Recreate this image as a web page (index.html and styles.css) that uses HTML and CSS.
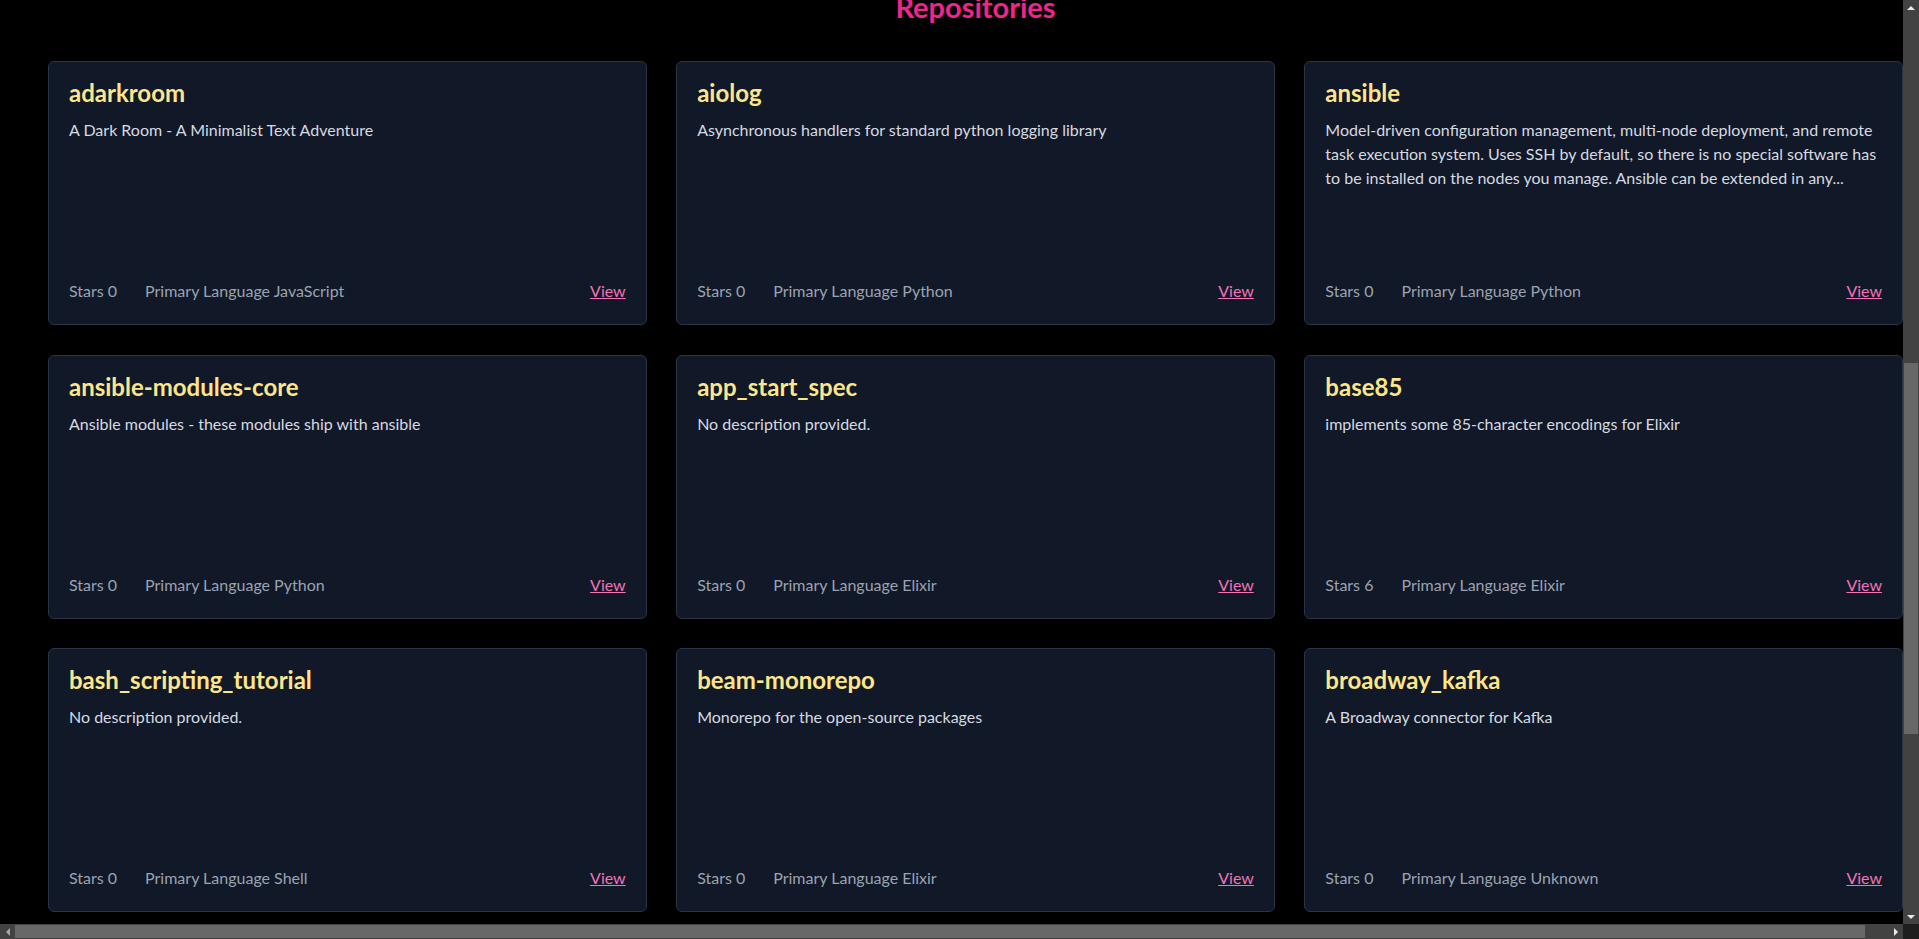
FILE: index.html
```html
<!DOCTYPE html>
<html lang="en">
<head>
<meta charset="utf-8">
<title>Repositories</title>
<link rel="stylesheet" href="styles.css">
</head>
<body>
<div class="window">
  <main class="viewport">
    <div class="page">
      <h1 class="page-title">Repositories</h1>
      <div class="repo-grid">
        <article class="card">
          <h2 class="card-name">adarkroom</h2>
          <p class="card-desc">A Dark Room - A Minimalist Text Adventure</p>
          <div class="card-foot"><span>Stars 0</span><span>Primary Language JavaScript</span><a class="view" href="#">View</a></div>
        </article>
        <article class="card">
          <h2 class="card-name">aiolog</h2>
          <p class="card-desc">Asynchronous handlers for standard python logging library</p>
          <div class="card-foot"><span>Stars 0</span><span>Primary Language Python</span><a class="view" href="#">View</a></div>
        </article>
        <article class="card">
          <h2 class="card-name">ansible</h2>
          <p class="card-desc">Model-driven configuration management, multi-node deployment, and remote task execution system. Uses SSH by default, so there is no special software has to be installed on the nodes you manage. Ansible can be extended in any...</p>
          <div class="card-foot"><span>Stars 0</span><span>Primary Language Python</span><a class="view" href="#">View</a></div>
        </article>
        <article class="card">
          <h2 class="card-name">ansible-modules-core</h2>
          <p class="card-desc">Ansible modules - these modules ship with ansible</p>
          <div class="card-foot"><span>Stars 0</span><span>Primary Language Python</span><a class="view" href="#">View</a></div>
        </article>
        <article class="card">
          <h2 class="card-name">app_start_spec</h2>
          <p class="card-desc">No description provided.</p>
          <div class="card-foot"><span>Stars 0</span><span>Primary Language Elixir</span><a class="view" href="#">View</a></div>
        </article>
        <article class="card">
          <h2 class="card-name">base85</h2>
          <p class="card-desc">implements some 85-character encodings for Elixir</p>
          <div class="card-foot"><span>Stars 6</span><span>Primary Language Elixir</span><a class="view" href="#">View</a></div>
        </article>
        <article class="card">
          <h2 class="card-name">bash_scripting_tutorial</h2>
          <p class="card-desc">No description provided.</p>
          <div class="card-foot"><span>Stars 0</span><span>Primary Language Shell</span><a class="view" href="#">View</a></div>
        </article>
        <article class="card">
          <h2 class="card-name">beam-monorepo</h2>
          <p class="card-desc">Monorepo for the open-source packages</p>
          <div class="card-foot"><span>Stars 0</span><span>Primary Language Elixir</span><a class="view" href="#">View</a></div>
        </article>
        <article class="card">
          <h2 class="card-name">broadway_kafka</h2>
          <p class="card-desc">A Broadway connector for Kafka</p>
          <div class="card-foot"><span>Stars 0</span><span>Primary Language Unknown</span><a class="view" href="#">View</a></div>
        </article>
      </div>
    </div>
  </main>
  <div class="vscroll">
    <div class="sb-btn"><span class="tri tri-up"></span></div>
    <div class="vtrack"><div class="vthumb"></div></div>
    <div class="sb-btn"><span class="tri tri-down"></span></div>
  </div>
  <div class="hscroll">
    <div class="sb-btn"><span class="tri tri-left"></span></div>
    <div class="htrack"><div class="hthumb"></div></div>
    <div class="sb-btn"><span class="tri tri-right"></span></div>
  </div>
  <div class="corner"></div>
</div>
</body>
</html>
```

FILE: styles.css
```css
* { box-sizing: border-box; }

html, body {
  margin: 0;
  height: 100%;
  background: #000;
  overflow: hidden;
}

body {
  font-family: Lato, "Liberation Sans", sans-serif;
  color: #d6dae1;
}

.window {
  height: 100vh;
  display: grid;
  grid-template-columns: 1fr 16px;
  grid-template-rows: 1fr 15px;
}

.viewport {
  overflow: hidden;
  min-width: 0;
  min-height: 0;
}

.page {
  width: 1951px;
  padding: 0 48px;
}

.page-title {
  margin: -11px 0 36px;
  text-align: center;
  font-size: 29px;
  line-height: 36px;
  font-weight: 700;
  color: #f0248c;
}

.repo-grid {
  display: grid;
  grid-template-columns: repeat(3, 1fr);
  gap: 29.5px;
}

.card {
  height: 264px;
  display: flex;
  flex-direction: column;
  padding: 20px 20px 21px;
  background: #111827;
  border: 1px solid #2b3545;
  border-radius: 6px;
}

.card-name {
  margin: 0;
  font-size: 24px;
  line-height: 22px;
  font-weight: 700;
  color: #fde68a;
}

.card-desc {
  margin: 14px 0 0;
  font-size: 16px;
  line-height: 24px;
  color: #d6dae1;
  display: -webkit-box;
  -webkit-line-clamp: 3;
  -webkit-box-orient: vertical;
  overflow: hidden;
}

.card-foot {
  margin-top: auto;
  display: flex;
  align-items: baseline;
  gap: 28px;
  font-size: 16px;
  line-height: 24px;
  color: #9aa3b1;
}

.view {
  margin-left: auto;
  color: #f472b6;
  text-decoration: underline;
}

/* scrollbars */
.vscroll {
  display: flex;
  flex-direction: column;
  background: #424242;
}

.hscroll {
  display: flex;
  background: #424242;
}

.sb-btn {
  flex: 0 0 15px;
  display: flex;
  align-items: center;
  justify-content: center;
  background: #424242;
}

.vtrack {
  flex: 1;
}

.vthumb {
  margin: 348px 1px 0;
  height: 371px;
  background: #686868;
}

.htrack {
  flex: 1;
  display: flex;
}

.hthumb {
  margin: 1px 0;
  width: 1850px;
  background: #686868;
}

.corner {
  background: #1e1e1e;
}

.tri {
  width: 0;
  height: 0;
  border: 4px solid transparent;
}

.tri-up { border-bottom-color: #e8e8e8; border-top-width: 0; }
.tri-down { border-top-color: #e8e8e8; border-bottom-width: 0; }
.tri-left { border-right-color: #a8a8a8; border-left-width: 0; }
.tri-right { border-left-color: #e8e8e8; border-right-width: 0; }
```
